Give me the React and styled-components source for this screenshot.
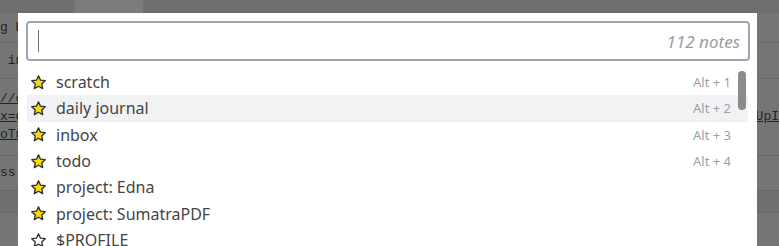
import React from 'react';
import styled, { createGlobalStyle } from 'styled-components';

const GlobalStyle = createGlobalStyle`
  html, body {
    margin: 0;
    padding: 0;
    overflow: hidden;
  }
  body {
    font-family: "Noto Sans", "Open Sans", sans-serif;
  }
`;

const Page = styled.div`
  position: relative;
  width: 779px;
  height: 246px;
  overflow: hidden;
  background: #757575;
`;

const TopBar = styled.div`
  display: flex;
  height: 13px;
  background: #6e6f71;
`;

const Tab = styled.div`
  width: ${(p) => p.w}px;
  background: ${(p) => (p.active ? '#7b7b7b' : 'transparent')};
`;

const Editor = styled.div`
  display: flex;
  flex-direction: column;
`;

const Block = styled.div`
  height: ${(p) => p.h}px;
  background: ${(p) => p.bg || '#757575'};
  border-bottom: 1px solid #686868;
  display: flex;
  align-items: center;
  box-sizing: border-box;
`;

const Lines = styled.div`
  width: 756px;
  display: flex;
  flex-direction: column;
`;

const Code = styled.div`
  font-family: "Liberation Mono", "DejaVu Sans Mono", monospace;
  font-size: 13px;
  line-height: 18px;
  color: #232323;
  white-space: pre;
  text-decoration: ${(p) => (p.link ? 'underline' : 'none')};
`;

const Modal = styled.div`
  position: absolute;
  left: 18px;
  top: 13px;
  width: 739px;
  height: 240px;
  background: #fff;
  padding: 8px 7px 0 8px;
  box-sizing: border-box;
`;

const SearchBox = styled.div`
  height: 40px;
  border: 2px solid #a1a4ae;
  border-radius: 4px;
  box-sizing: border-box;
  display: flex;
  align-items: center;
  padding: 0 8px 0 10px;
`;

const Caret = styled.span`
  width: 1px;
  height: 22px;
  background: #6f6f6f;
`;

const Count = styled.span`
  margin-left: auto;
  font-style: italic;
  font-size: 17px;
  color: #9c9ca8;
`;

const List = styled.div`
  position: relative;
  margin: 8px 2px 0 1px;
`;

const Row = styled.div`
  display: flex;
  align-items: center;
  height: 26.33px;
  padding: 0 17px 0 3px;
  background: ${(p) => (p.selected ? '#f1f2f4' : 'transparent')};
`;

const Star = styled.svg`
  width: 17px;
  height: 17px;
  margin-right: 9px;
  flex-shrink: 0;
`;

const Name = styled.span`
  font-size: 16px;
  color: #454545;
`;

const Shortcut = styled.span`
  margin-left: auto;
  font-size: 13px;
  color: #9e9eaa;
`;

const Thumb = styled.div`
  position: absolute;
  right: 2px;
  top: 2px;
  width: 8px;
  height: 39px;
  border-radius: 4px;
  background: #8b8b8b;
`;

const notes = [
  { name: 'scratch', key: 'Alt + 1', fav: true },
  { name: 'daily journal', key: 'Alt + 2', fav: true, selected: true },
  { name: 'inbox', key: 'Alt + 3', fav: true },
  { name: 'todo', key: 'Alt + 4', fav: true },
  { name: 'project: Edna', fav: true },
  { name: 'project: SumatraPDF', fav: true },
  { name: '$PROFILE', fav: false },
];

function StarIcon({ filled }) {
  return (
    <Star viewBox="0 0 24 24">
      <path
        d="M12 2.6l2.85 6.1 6.65.75-4.95 4.55 1.35 6.6L12 17.3l-5.9 3.3 1.35-6.6L2.5 9.45l6.65-.75z"
        fill={filled ? '#f7da0c' : '#fff'}
        stroke="#2e2e2e"
        strokeWidth="1.9"
        strokeLinejoin="round"
      />
    </Star>
  );
}

export default function App() {
  return (
    <Page>
      <GlobalStyle />
      <TopBar>
        <Tab w={75} />
        <Tab w={68} active />
      </TopBar>
      <Editor>
        <Block h={30}>
          <Lines>
            <Code>g Preview</Code>
          </Lines>
        </Block>
        <Block h={36}>
          <Lines>
            <Code> in</Code>
          </Lines>
        </Block>
        <Block h={77}>
          <Lines>
            <Code link>//c</Code>
            <Code link>x=g</Code>
            <Code link>oTn</Code>
          </Lines>
          <Code link>UpI</Code>
        </Block>
        <Block h={35}>
          <Lines>
            <Code>ss</Code>
          </Lines>
        </Block>
        <Block h={22} bg="#6f6f6f" />
        <Block h={40} />
      </Editor>
      <Modal>
        <SearchBox>
          <Caret />
          <Count>112 notes</Count>
        </SearchBox>
        <List>
          {notes.map((n) => (
            <Row key={n.name} selected={n.selected}>
              <StarIcon filled={n.fav} />
              <Name>{n.name}</Name>
              {n.key && <Shortcut>{n.key}</Shortcut>}
            </Row>
          ))}
          <Thumb />
        </List>
      </Modal>
    </Page>
  );
}
